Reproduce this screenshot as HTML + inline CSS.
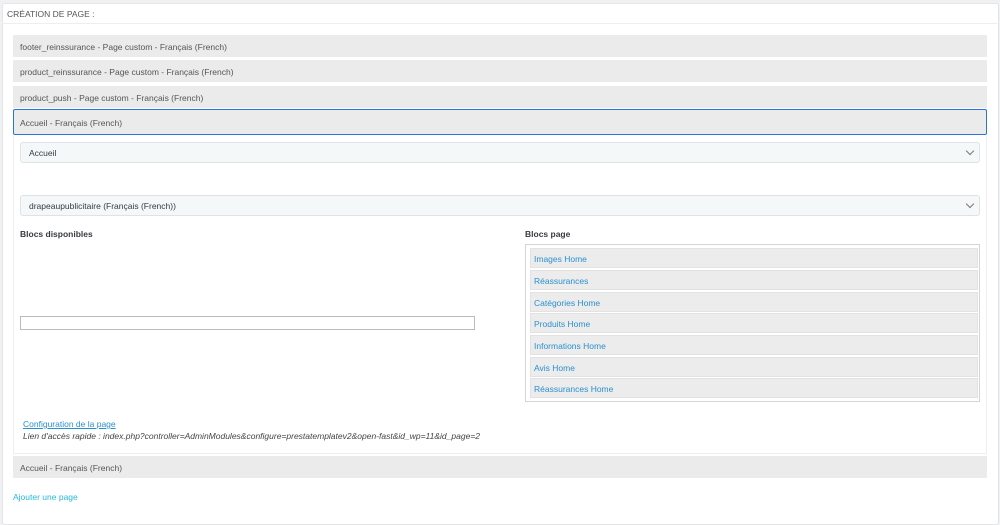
<!DOCTYPE html>
<html><head><style>
body{margin:0;width:1000px;height:511px;background:#eff1f2;font-family:"Liberation Sans",sans-serif;font-size:8.5px;color:#363a41;position:relative;overflow:hidden}
.panel{position:absolute;left:2px;top:3px;width:995px;height:520px;background:#fff;border:1px solid #e3e5e7;border-radius:3px}
.a{position:absolute;left:13px;width:974px;height:22px;background:#ebebeb;line-height:24px;text-indent:7px;color:#555}
.sel{position:absolute;left:20px;width:958px;height:19px;border:1px solid #dfe3e6;background:#f5f8f9;border-radius:3px;line-height:21px;text-indent:8px;color:#363a41}
.sel:after{content:"";position:absolute;right:6px;top:5px;width:5px;height:5px;border-right:1px solid #777;border-bottom:1px solid #777;transform:rotate(45deg)}
.b{position:absolute;left:4px;width:446px;height:18px;background:#ececec;border:1px solid #e2e2e2;line-height:20px;text-indent:3px;color:#2a8fcf}
</style></head><body>
<div class="panel"></div>
<div style="position:absolute;left:2px;top:3px;width:995px;height:20px;border-bottom:1px solid #eee"></div>
<div style="position:absolute;left:7px;top:9px;color:#555">CRÉATION DE PAGE :</div>
<div class="a" style="top:35px">footer_reinssurance - Page custom - Français (French)</div>
<div class="a" style="top:60px">product_reinssurance - Page custom - Français (French)</div>
<div class="a" style="top:86px">product_push - Page custom - Français (French)</div>
<div class="a" style="top:109px;height:24px;line-height:26px;border:1px solid #2b74d9;border-radius:2px;width:972px;text-indent:6px">Accueil - Français (French)</div>
<div style="position:absolute;left:13px;top:135px;width:972px;height:318px;border:1px solid #eee;border-top:none"></div>
<div class="sel" style="top:142px">Accueil</div>
<div class="sel" style="top:195px">drapeaupublicitaire (Français (French))</div>
<div style="position:absolute;left:20px;top:229px;font-weight:bold">Blocs disponibles</div>
<div style="position:absolute;left:525px;top:229px;font-weight:bold">Blocs page</div>
<div style="position:absolute;left:20px;top:316px;width:453px;height:12px;border:1px solid #bbb"></div>
<div style="position:absolute;left:525px;top:244px;width:453px;height:156px;border:1px solid #d5d5d5">
<div class="b" style="top:3px">Images Home</div>
<div class="b" style="top:25px">Réassurances</div>
<div class="b" style="top:47px">Catégories Home</div>
<div class="b" style="top:68px">Produits Home</div>
<div class="b" style="top:90px">Informations Home</div>
<div class="b" style="top:112px">Avis Home</div>
<div class="b" style="top:133px">Réassurances Home</div>
</div>
<div style="position:absolute;left:23px;top:419px;color:#2a8fcf;text-decoration:underline">Configuration de la page</div>
<div style="position:absolute;left:23px;top:431px;font-style:italic;color:#444">Lien d'accès rapide : index.php?controller=AdminModules&amp;configure=prestatemplatev2&amp;open-fast&amp;id_wp=11&amp;id_page=2</div>
<div class="a" style="top:456px">Accueil - Français (French)</div>
<div style="position:absolute;left:13px;top:492px;color:#25b9d7">Ajouter une page</div>
</body></html>
